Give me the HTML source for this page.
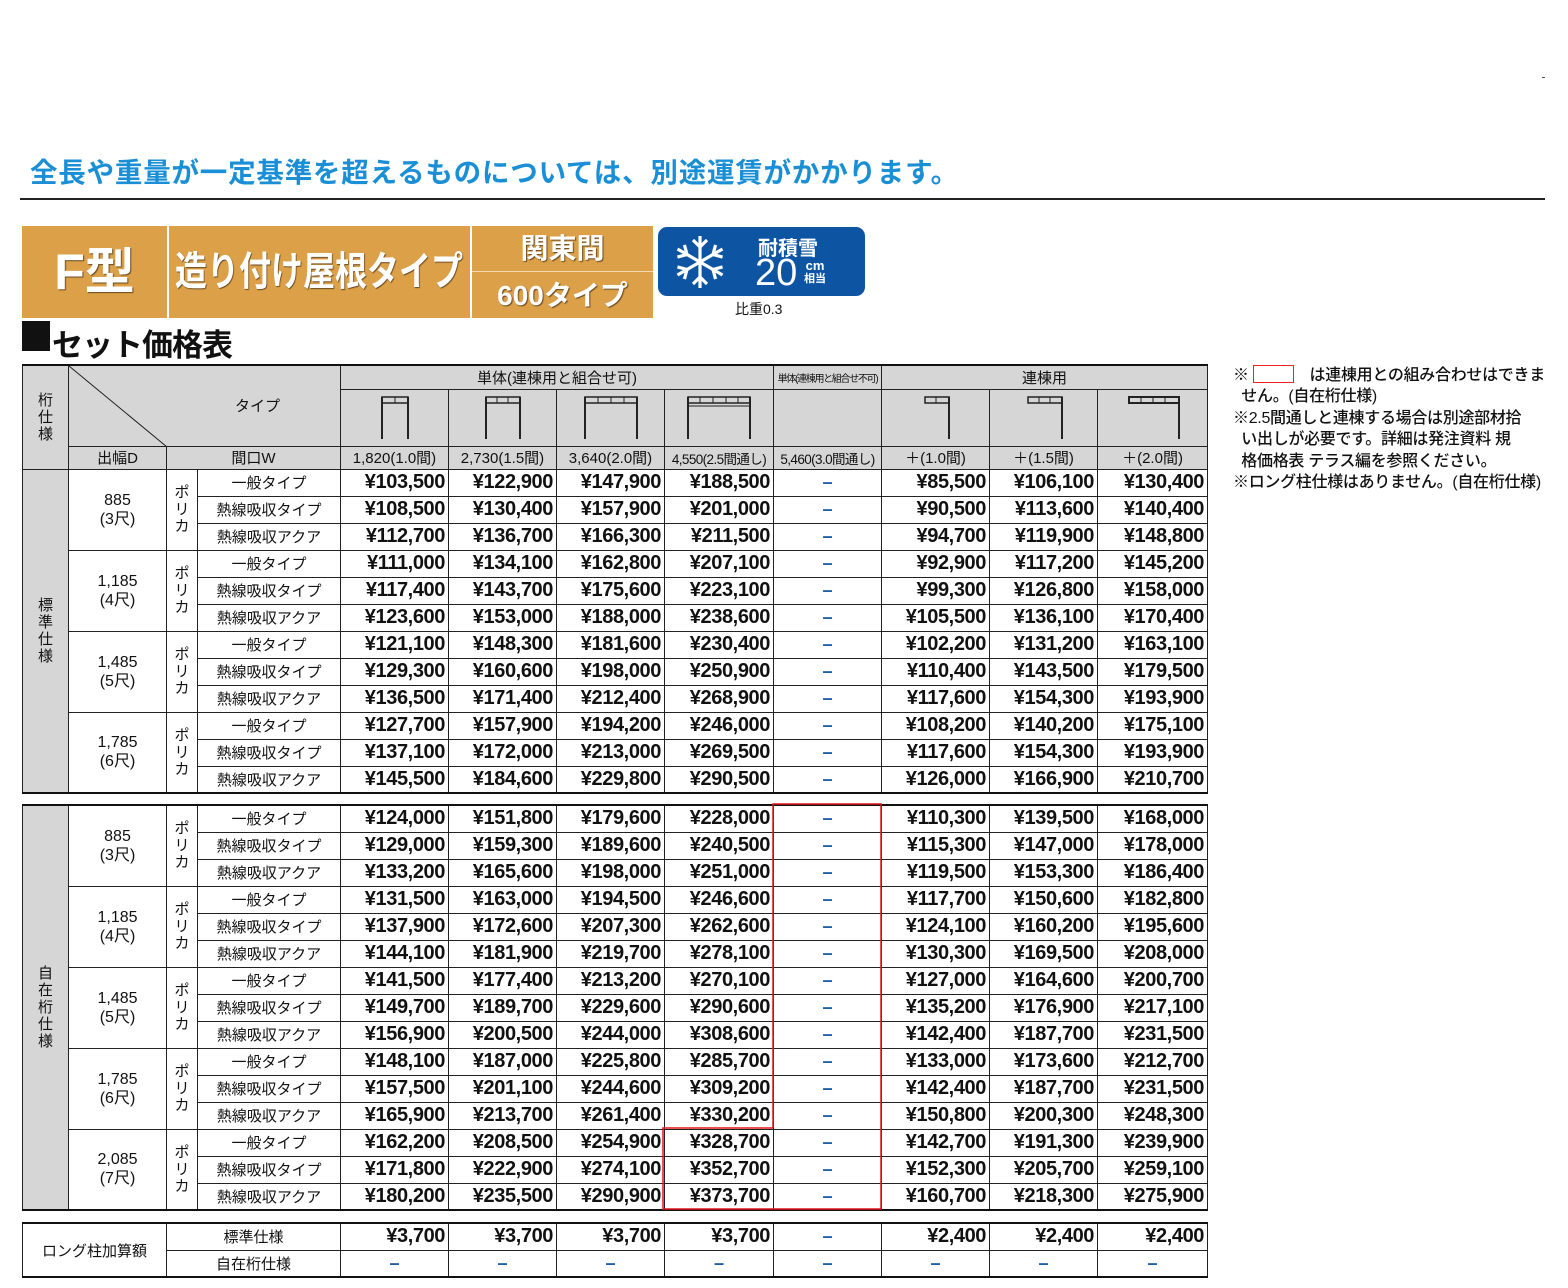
<!DOCTYPE html>
<html><head><meta charset="utf-8">
<style>
*{box-sizing:border-box;margin:0;padding:0}
body{width:1568px;height:1288px;background:#fff;position:relative;overflow:hidden;font-family:"Liberation Sans","Noto Sans CJK JP",sans-serif;color:#111}
.abs{position:absolute}
.top{left:30px;top:150px;font-size:27.5px;font-weight:bold;color:#1a8fd6;white-space:nowrap;letter-spacing:0.8px}
.hr{left:20px;top:198px;width:1525px;height:2px;background:#222}
.ob{background:#dba048;color:#fff;font-weight:bold;text-shadow:1px 1px 1px #6a4a20;white-space:nowrap}
table{position:absolute;border-collapse:collapse;table-layout:fixed}
td{border:1px solid #222;text-align:center;vertical-align:middle;white-space:nowrap;overflow:hidden;padding:0}
td.p{text-align:right;padding-right:3px;font-weight:bold;font-size:20px;letter-spacing:-0.4px}
td.t{font-size:15px}
td.d{color:#1d5fa5;font-weight:bold;font-size:18px}
td.g{background:#d6d6d6}
td.v{font-size:15px;line-height:17px}
td.D{font-size:16px;line-height:19px}
tr.r{height:27px}
.h td{background:#d6d6d6;font-size:15px}
.tb{border-top:2px solid #111}
.notes{left:1233px;top:365px;font-size:16px;line-height:21.4px;white-space:nowrap;letter-spacing:-0.3px;font-weight:500}
</style></head><body>
<div class="abs" style="left:1542px;top:77px;width:3px;height:1px;background:#555"></div>
<div class="abs top">全長や重量が一定基準を超えるものについては、別途運賃がかかります。</div>
<div class="abs hr"></div>

<div class="abs ob" style="left:22px;top:226px;width:145px;height:92px;font-size:50px;line-height:92px;text-align:center">F型</div>
<div class="abs ob" style="left:169px;top:226px;width:301px;height:92px;font-size:40px;line-height:92px;"><span style="display:inline-block;transform:scaleX(0.8);transform-origin:left;margin-left:6px">造り付け屋根タイプ</span></div>
<div class="abs ob" style="left:472px;top:226px;width:181px;height:45px;font-size:28px;line-height:46px;text-align:center">関東間</div>
<div class="abs" style="left:472px;top:271px;width:181px;height:1px;background:#f3d9ae"></div>
<div class="abs ob" style="left:472px;top:272px;width:181px;height:46px;font-size:28px;line-height:48px;text-align:center">600タイプ</div>
<div class="abs" style="left:658px;top:227px;width:207px;height:69px;background:#0d55a3;border-radius:9px"></div>
<svg class="abs" style="left:672px;top:233px" width="56" height="58" viewBox="-28 -29 56 58" stroke="#fff" stroke-width="3.2" fill="none">
<g id="a"><line x1="0" y1="0" x2="0" y2="-26"/><polyline points="-7,-22 0,-15 7,-22"/></g>
<use href="#a" transform="rotate(60)"/><use href="#a" transform="rotate(120)"/><use href="#a" transform="rotate(180)"/><use href="#a" transform="rotate(240)"/><use href="#a" transform="rotate(300)"/>
</svg>
<div class="abs" style="left:758px;top:232px;color:#fff;font-size:20px;font-weight:bold">耐積雪</div>
<div class="abs" style="left:755px;top:252px;color:#fff;font-size:38px;line-height:42px">20</div>
<div class="abs" style="left:804px;top:260px;color:#fff;font-size:13px;line-height:12px;text-align:center;font-weight:bold">cm<br><span style="font-size:11px">相当</span></div>
<div class="abs" style="left:735px;top:299px;font-size:14px">比重0.3</div>

<div class="abs" style="left:22px;top:321px;width:28px;height:30px;background:#111"></div>
<div class="abs" style="left:52px;top:320px;font-size:31px;font-weight:bold;white-space:nowrap;letter-spacing:-1px">セット価格表</div>

<div class="abs notes">※ <span style="display:inline-block;width:41px;height:18px;border:1.5px solid #e22;vertical-align:-3px"></span>　は連棟用との組み合わせはできま<br>&nbsp;&nbsp;せん。(自在桁仕様)<br>※2.5間通しと連棟する場合は別途部材拾<br>&nbsp;&nbsp;い出しが必要です。詳細は発注資料 規<br>&nbsp;&nbsp;格価格表 テラス編を参照ください。<br>※ロング柱仕様はありません。(自在桁仕様)</div>

<!-- TABLE 1 -->
<table style="left:22px;top:364px;width:1185px">
<colgroup><col style="width:46px"><col style="width:98px"><col style="width:31px"><col style="width:143px"><col style="width:108px"><col style="width:108px"><col style="width:108px"><col style="width:109px"><col style="width:108px"><col style="width:108px"><col style="width:108px"><col style="width:110px"></colgroup>
<tr class="h" style="height:24px"><td rowspan="3" class="v tb" style="line-height:17px">桁<br>仕<br>様</td><td colspan="3" rowspan="2" class="tb" style="position:relative;text-align:left;padding-left:166px;vertical-align:middle">タイプ<svg style="position:absolute;left:0;top:0" width="100" height="82"><line x1="0" y1="0" x2="98" y2="81" stroke="#222" stroke-width="1"/></svg></td><td colspan="4" class="tb">単体(連棟用と組合せ可)</td><td class="tb" style="font-size:10px;letter-spacing:-1.3px">単体(連棟用と組合せ不可)</td><td colspan="3" class="tb">連棟用</td></tr>
<tr class="h" style="height:57px">
<td><svg width="40" height="50"><rect x="7" y="6" width="26" height="6" fill="none" stroke="#222" stroke-width="1.5"/><line x1="20" y1="6" x2="20" y2="12" stroke="#222"/><line x1="7" y1="6" x2="7" y2="48" stroke="#222" stroke-width="2"/><line x1="33" y1="6" x2="33" y2="48" stroke="#222" stroke-width="2"/></svg></td>
<td><svg width="44" height="50"><rect x="5" y="6" width="34" height="6" fill="none" stroke="#222" stroke-width="1.5"/><line x1="16" y1="6" x2="16" y2="12" stroke="#222"/><line x1="27" y1="6" x2="27" y2="12" stroke="#222"/><line x1="5" y1="6" x2="5" y2="48" stroke="#222" stroke-width="2"/><line x1="39" y1="6" x2="39" y2="48" stroke="#222" stroke-width="2"/></svg></td>
<td><svg width="56" height="50"><rect x="2" y="6" width="52" height="6" fill="none" stroke="#222" stroke-width="1.5"/><line x1="15" y1="6" x2="15" y2="12" stroke="#222"/><line x1="28" y1="6" x2="28" y2="12" stroke="#222"/><line x1="41" y1="6" x2="41" y2="12" stroke="#222"/><line x1="2" y1="6" x2="2" y2="48" stroke="#222" stroke-width="2"/><line x1="54" y1="6" x2="54" y2="48" stroke="#222" stroke-width="2"/></svg></td>
<td><svg width="66" height="50"><rect x="2" y="6" width="62" height="6" fill="none" stroke="#222" stroke-width="1.5"/><line x1="2" y1="15" x2="64" y2="15" stroke="#222"/><line x1="14" y1="6" x2="14" y2="12" stroke="#222"/><line x1="27" y1="6" x2="27" y2="12" stroke="#222"/><line x1="40" y1="6" x2="40" y2="12" stroke="#222"/><line x1="52" y1="6" x2="52" y2="12" stroke="#222"/><line x1="2" y1="6" x2="2" y2="48" stroke="#222" stroke-width="2"/><line x1="64" y1="6" x2="64" y2="48" stroke="#222" stroke-width="2"/></svg></td>
<td></td>
<td><svg width="30" height="50" style="margin-left:4px"><rect x="2" y="6" width="24" height="6" fill="none" stroke="#222" stroke-width="1.5"/><line x1="13" y1="6" x2="13" y2="12" stroke="#222"/><line x1="26" y1="6" x2="26" y2="48" stroke="#222" stroke-width="2"/></svg></td>
<td><svg width="40" height="50" style="margin-left:4px"><rect x="2" y="6" width="34" height="6" fill="none" stroke="#222" stroke-width="1.5"/><line x1="13" y1="6" x2="13" y2="12" stroke="#222"/><line x1="24" y1="6" x2="24" y2="12" stroke="#222"/><line x1="36" y1="6" x2="36" y2="48" stroke="#222" stroke-width="2"/></svg></td>
<td><svg width="56" height="50" style="margin-left:4px"><rect x="2" y="6" width="50" height="6" fill="none" stroke="#222" stroke-width="2"/><line x1="14" y1="6" x2="14" y2="12" stroke="#222"/><line x1="26" y1="6" x2="26" y2="12" stroke="#222"/><line x1="38" y1="6" x2="38" y2="12" stroke="#222"/><line x1="52" y1="6" x2="52" y2="48" stroke="#222" stroke-width="2"/></svg></td>
</tr>
<tr class="h" style="height:23px"><td>出幅D</td><td colspan="2">間口W</td><td>1,820(1.0間)</td><td>2,730(1.5間)</td><td>3,640(2.0間)</td><td style="font-size:13.5px;letter-spacing:-0.6px">4,550(2.5間通し)</td><td style="font-size:13.5px;letter-spacing:-0.6px">5,460(3.0間通し)</td><td>＋(1.0間)</td><td>＋(1.5間)</td><td>＋(2.0間)</td></tr>

<tr class="r"><td rowspan="12" class="g v" style="border-bottom:2px solid #111">標<br>準<br>仕<br>様</td><td rowspan="3" class="D">885<br>(3尺)</td><td rowspan="3" class="v">ポ<br>リ<br>カ</td><td class="t">一般タイプ</td><td class="p">¥103,500</td><td class="p">¥122,900</td><td class="p">¥147,900</td><td class="p">¥188,500</td><td class="d">–</td><td class="p">¥85,500</td><td class="p">¥106,100</td><td class="p">¥130,400</td></tr>
<tr class="r"><td class="t">熱線吸収タイプ</td><td class="p">¥108,500</td><td class="p">¥130,400</td><td class="p">¥157,900</td><td class="p">¥201,000</td><td class="d">–</td><td class="p">¥90,500</td><td class="p">¥113,600</td><td class="p">¥140,400</td></tr>
<tr class="r"><td class="t">熱線吸収アクア</td><td class="p">¥112,700</td><td class="p">¥136,700</td><td class="p">¥166,300</td><td class="p">¥211,500</td><td class="d">–</td><td class="p">¥94,700</td><td class="p">¥119,900</td><td class="p">¥148,800</td></tr>
<tr class="r"><td rowspan="3" class="D">1,185<br>(4尺)</td><td rowspan="3" class="v">ポ<br>リ<br>カ</td><td class="t">一般タイプ</td><td class="p">¥111,000</td><td class="p">¥134,100</td><td class="p">¥162,800</td><td class="p">¥207,100</td><td class="d">–</td><td class="p">¥92,900</td><td class="p">¥117,200</td><td class="p">¥145,200</td></tr>
<tr class="r"><td class="t">熱線吸収タイプ</td><td class="p">¥117,400</td><td class="p">¥143,700</td><td class="p">¥175,600</td><td class="p">¥223,100</td><td class="d">–</td><td class="p">¥99,300</td><td class="p">¥126,800</td><td class="p">¥158,000</td></tr>
<tr class="r"><td class="t">熱線吸収アクア</td><td class="p">¥123,600</td><td class="p">¥153,000</td><td class="p">¥188,000</td><td class="p">¥238,600</td><td class="d">–</td><td class="p">¥105,500</td><td class="p">¥136,100</td><td class="p">¥170,400</td></tr>
<tr class="r"><td rowspan="3" class="D">1,485<br>(5尺)</td><td rowspan="3" class="v">ポ<br>リ<br>カ</td><td class="t">一般タイプ</td><td class="p">¥121,100</td><td class="p">¥148,300</td><td class="p">¥181,600</td><td class="p">¥230,400</td><td class="d">–</td><td class="p">¥102,200</td><td class="p">¥131,200</td><td class="p">¥163,100</td></tr>
<tr class="r"><td class="t">熱線吸収タイプ</td><td class="p">¥129,300</td><td class="p">¥160,600</td><td class="p">¥198,000</td><td class="p">¥250,900</td><td class="d">–</td><td class="p">¥110,400</td><td class="p">¥143,500</td><td class="p">¥179,500</td></tr>
<tr class="r"><td class="t">熱線吸収アクア</td><td class="p">¥136,500</td><td class="p">¥171,400</td><td class="p">¥212,400</td><td class="p">¥268,900</td><td class="d">–</td><td class="p">¥117,600</td><td class="p">¥154,300</td><td class="p">¥193,900</td></tr>
<tr class="r"><td rowspan="3" class="D" style="border-bottom:2px solid #111">1,785<br>(6尺)</td><td rowspan="3" class="v" style="border-bottom:2px solid #111">ポ<br>リ<br>カ</td><td class="t">一般タイプ</td><td class="p">¥127,700</td><td class="p">¥157,900</td><td class="p">¥194,200</td><td class="p">¥246,000</td><td class="d">–</td><td class="p">¥108,200</td><td class="p">¥140,200</td><td class="p">¥175,100</td></tr>
<tr class="r"><td class="t">熱線吸収タイプ</td><td class="p">¥137,100</td><td class="p">¥172,000</td><td class="p">¥213,000</td><td class="p">¥269,500</td><td class="d">–</td><td class="p">¥117,600</td><td class="p">¥154,300</td><td class="p">¥193,900</td></tr>
<tr class="r" style="border-bottom:2px solid #111"><td class="t">熱線吸収アクア</td><td class="p">¥145,500</td><td class="p">¥184,600</td><td class="p">¥229,800</td><td class="p">¥290,500</td><td class="d">–</td><td class="p">¥126,000</td><td class="p">¥166,900</td><td class="p">¥210,700</td></tr>
</table>

<!-- TABLE 2 -->
<table style="left:22px;top:804px;width:1185px">
<colgroup><col style="width:46px"><col style="width:98px"><col style="width:31px"><col style="width:143px"><col style="width:108px"><col style="width:108px"><col style="width:108px"><col style="width:109px"><col style="width:108px"><col style="width:108px"><col style="width:108px"><col style="width:110px"></colgroup>
<tr class="r" style="border-top:2px solid #111"><td rowspan="15" class="g v" style="border-bottom:2px solid #111">自<br>在<br>桁<br>仕<br>様</td><td rowspan="3" class="D">885<br>(3尺)</td><td rowspan="3" class="v">ポ<br>リ<br>カ</td><td class="t">一般タイプ</td><td class="p">¥124,000</td><td class="p">¥151,800</td><td class="p">¥179,600</td><td class="p">¥228,000</td><td class="d">–</td><td class="p">¥110,300</td><td class="p">¥139,500</td><td class="p">¥168,000</td></tr>
<tr class="r"><td class="t">熱線吸収タイプ</td><td class="p">¥129,000</td><td class="p">¥159,300</td><td class="p">¥189,600</td><td class="p">¥240,500</td><td class="d">–</td><td class="p">¥115,300</td><td class="p">¥147,000</td><td class="p">¥178,000</td></tr>
<tr class="r"><td class="t">熱線吸収アクア</td><td class="p">¥133,200</td><td class="p">¥165,600</td><td class="p">¥198,000</td><td class="p">¥251,000</td><td class="d">–</td><td class="p">¥119,500</td><td class="p">¥153,300</td><td class="p">¥186,400</td></tr>
<tr class="r"><td rowspan="3" class="D">1,185<br>(4尺)</td><td rowspan="3" class="v">ポ<br>リ<br>カ</td><td class="t">一般タイプ</td><td class="p">¥131,500</td><td class="p">¥163,000</td><td class="p">¥194,500</td><td class="p">¥246,600</td><td class="d">–</td><td class="p">¥117,700</td><td class="p">¥150,600</td><td class="p">¥182,800</td></tr>
<tr class="r"><td class="t">熱線吸収タイプ</td><td class="p">¥137,900</td><td class="p">¥172,600</td><td class="p">¥207,300</td><td class="p">¥262,600</td><td class="d">–</td><td class="p">¥124,100</td><td class="p">¥160,200</td><td class="p">¥195,600</td></tr>
<tr class="r"><td class="t">熱線吸収アクア</td><td class="p">¥144,100</td><td class="p">¥181,900</td><td class="p">¥219,700</td><td class="p">¥278,100</td><td class="d">–</td><td class="p">¥130,300</td><td class="p">¥169,500</td><td class="p">¥208,000</td></tr>
<tr class="r"><td rowspan="3" class="D">1,485<br>(5尺)</td><td rowspan="3" class="v">ポ<br>リ<br>カ</td><td class="t">一般タイプ</td><td class="p">¥141,500</td><td class="p">¥177,400</td><td class="p">¥213,200</td><td class="p">¥270,100</td><td class="d">–</td><td class="p">¥127,000</td><td class="p">¥164,600</td><td class="p">¥200,700</td></tr>
<tr class="r"><td class="t">熱線吸収タイプ</td><td class="p">¥149,700</td><td class="p">¥189,700</td><td class="p">¥229,600</td><td class="p">¥290,600</td><td class="d">–</td><td class="p">¥135,200</td><td class="p">¥176,900</td><td class="p">¥217,100</td></tr>
<tr class="r"><td class="t">熱線吸収アクア</td><td class="p">¥156,900</td><td class="p">¥200,500</td><td class="p">¥244,000</td><td class="p">¥308,600</td><td class="d">–</td><td class="p">¥142,400</td><td class="p">¥187,700</td><td class="p">¥231,500</td></tr>
<tr class="r"><td rowspan="3" class="D">1,785<br>(6尺)</td><td rowspan="3" class="v">ポ<br>リ<br>カ</td><td class="t">一般タイプ</td><td class="p">¥148,100</td><td class="p">¥187,000</td><td class="p">¥225,800</td><td class="p">¥285,700</td><td class="d">–</td><td class="p">¥133,000</td><td class="p">¥173,600</td><td class="p">¥212,700</td></tr>
<tr class="r"><td class="t">熱線吸収タイプ</td><td class="p">¥157,500</td><td class="p">¥201,100</td><td class="p">¥244,600</td><td class="p">¥309,200</td><td class="d">–</td><td class="p">¥142,400</td><td class="p">¥187,700</td><td class="p">¥231,500</td></tr>
<tr class="r"><td class="t">熱線吸収アクア</td><td class="p">¥165,900</td><td class="p">¥213,700</td><td class="p">¥261,400</td><td class="p">¥330,200</td><td class="d">–</td><td class="p">¥150,800</td><td class="p">¥200,300</td><td class="p">¥248,300</td></tr>
<tr class="r"><td rowspan="3" class="D" style="border-bottom:2px solid #111">2,085<br>(7尺)</td><td rowspan="3" class="v" style="border-bottom:2px solid #111">ポ<br>リ<br>カ</td><td class="t">一般タイプ</td><td class="p">¥162,200</td><td class="p">¥208,500</td><td class="p">¥254,900</td><td class="p">¥328,700</td><td class="d">–</td><td class="p">¥142,700</td><td class="p">¥191,300</td><td class="p">¥239,900</td></tr>
<tr class="r"><td class="t">熱線吸収タイプ</td><td class="p">¥171,800</td><td class="p">¥222,900</td><td class="p">¥274,100</td><td class="p">¥352,700</td><td class="d">–</td><td class="p">¥152,300</td><td class="p">¥205,700</td><td class="p">¥259,100</td></tr>
<tr class="r" style="border-bottom:2px solid #111"><td class="t">熱線吸収アクア</td><td class="p">¥180,200</td><td class="p">¥235,500</td><td class="p">¥290,900</td><td class="p">¥373,700</td><td class="d">–</td><td class="p">¥160,700</td><td class="p">¥218,300</td><td class="p">¥275,900</td></tr>
</table>

<!-- TABLE 3 -->
<table style="left:22px;top:1222px;width:1185px">
<colgroup><col style="width:46px"><col style="width:98px"><col style="width:31px"><col style="width:143px"><col style="width:108px"><col style="width:108px"><col style="width:108px"><col style="width:109px"><col style="width:108px"><col style="width:108px"><col style="width:108px"><col style="width:110px"></colgroup>
<tr class="r" style="border-top:2px solid #111"><td colspan="2" rowspan="2" class="t" style="border-bottom:2px solid #111">ロング柱加算額</td><td colspan="2" class="t">標準仕様</td><td class="p">¥3,700</td><td class="p">¥3,700</td><td class="p">¥3,700</td><td class="p">¥3,700</td><td class="d">–</td><td class="p">¥2,400</td><td class="p">¥2,400</td><td class="p">¥2,400</td></tr>
<tr class="r" style="border-bottom:2px solid #111"><td colspan="2" class="t">自在桁仕様</td><td class="d">–</td><td class="d">–</td><td class="d">–</td><td class="d">–</td><td class="d">–</td><td class="d">–</td><td class="d">–</td><td class="d">–</td></tr>
</table>

<svg class="abs" style="left:0;top:0" width="1568" height="1288"><polyline points="773,1128 773,804 881,804 881,1209 663,1209 663,1128 773,1128" fill="none" stroke="#e0141c" stroke-width="1.5"/></svg>
</body></html>
